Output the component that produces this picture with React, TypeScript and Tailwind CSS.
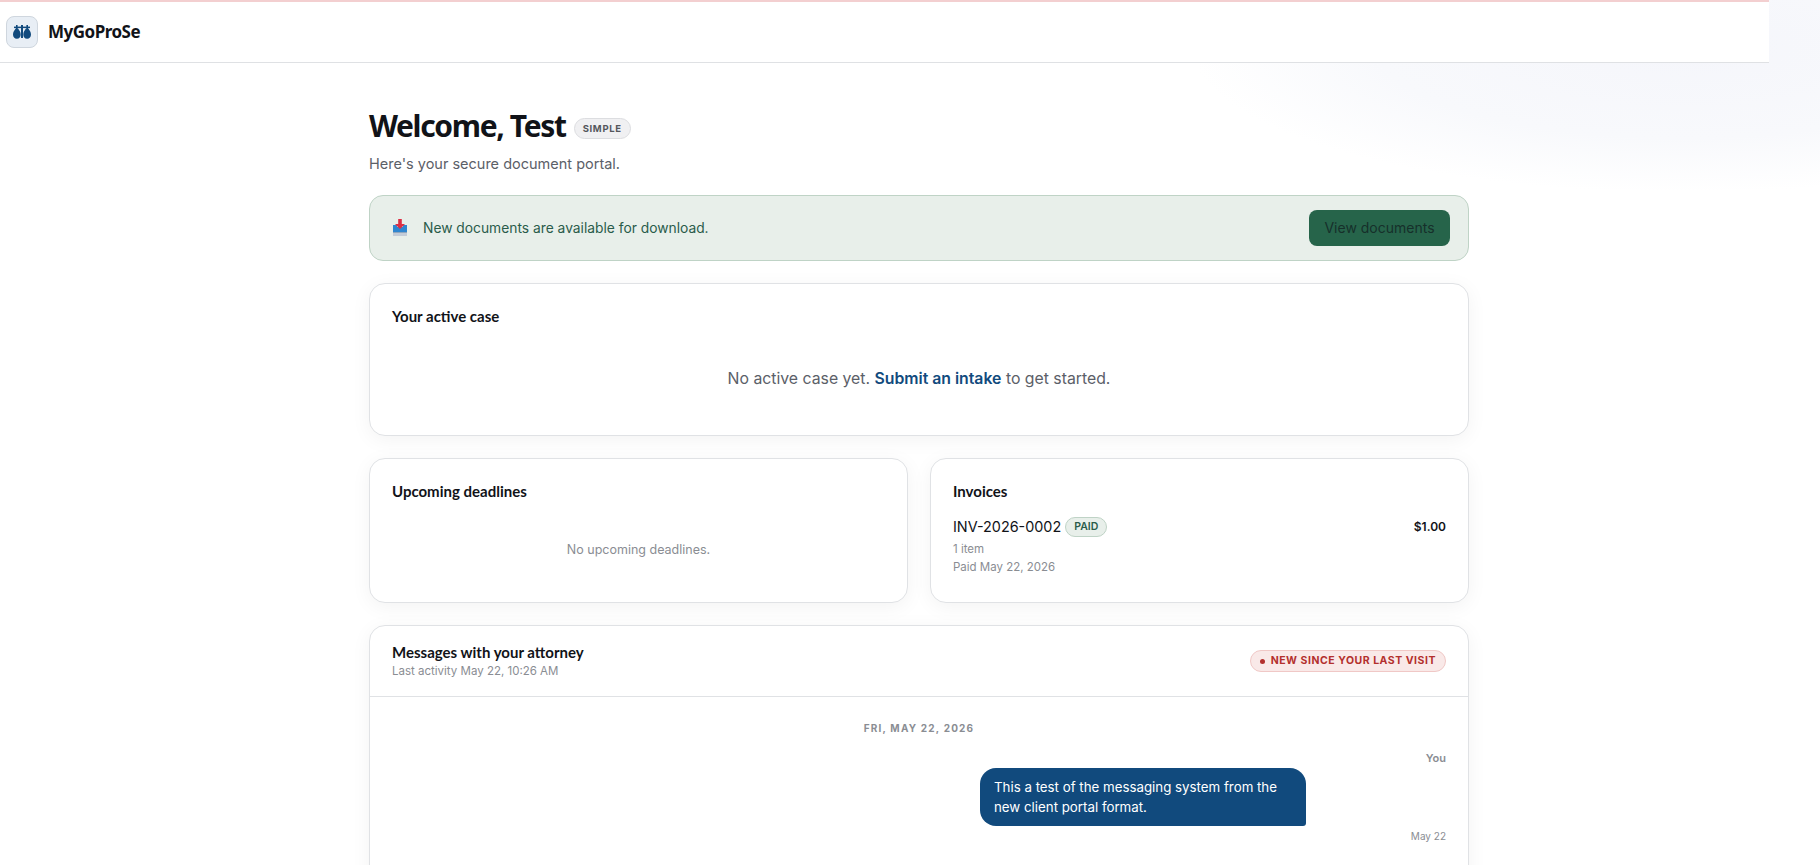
const heading = "font-['Lato',sans-serif]";
const display = "font-['Noto_Sans',sans-serif]";

const ScaleLogo = () => (
  <svg width="18" height="14" viewBox="0 0 18 14" fill="#114a7d">
    <rect x="8" y="0" width="2" height="13" />
    <rect x="3" y="0" width="1.6" height="4" />
    <rect x="13.4" y="0" width="1.6" height="4" />
    <rect x="1" y="1.6" width="16" height="1.5" />
    <path d="M2.6 3.5C1.4 5.6 0 7 0 9.6 0 12 1.5 13.8 3.9 13.8s3.8-1.8 3.8-4.2c0-2.6-1.4-4-2.6-6.1z" />
    <path d="M12.9 3.5c-1.2 2.1-2.6 3.5-2.6 6.1 0 2.4 1.4 4.2 3.8 4.2S18 12 18 9.6c0-2.6-1.4-4-2.6-6.1z" />
  </svg>
);

const InboxEmoji = () => (
  <svg width="16" height="18" viewBox="0 0 16 18">
    <rect x="1" y="10" width="14" height="7" fill="#c3ccd8" />
    <path d="M1 6h4v2h6V6h4v7H1z" fill="#2f86d0" />
    <rect x="1" y="13" width="14" height="1" fill="#8fa6bd" />
    <path d="M6.2 0h3.6v5H13l-5 5-5-5h3.2z" fill="#dd2e44" />
  </svg>
);

const Card = ({ className = "", children }: { className?: string; children: React.ReactNode }) => (
  <div className={`rounded-2xl border border-[#e0e2e5] bg-white shadow-[0_4px_20px_rgba(0,0,0,0.05)] ${className}`}>
    {children}
  </div>
);

const CardTitle = ({ children }: { children: React.ReactNode }) => (
  <h3 className={`${heading} text-[15px] leading-5 font-bold text-[#111318]`}>{children}</h3>
);

export default function App() {
  return (
    <div className="relative h-[865px] overflow-hidden bg-white font-['Inter',sans-serif] text-[#111318]">
      <div className="absolute top-0 right-0 h-[190px] w-[620px] bg-[radial-gradient(ellipse_at_78%_25%,#f5f6fb_0%,#f8f9fc_45%,transparent_72%)]" />

      <header className="relative flex h-[63px] w-[1769px] items-center gap-2.5 border-t-2 border-b border-t-[#f3cfd0] border-b-[#dfe1e4] bg-white pl-1.5">
        <div className="flex size-8 items-center justify-center rounded-lg border border-[#cfd6de] bg-[#e8eef5]">
          <ScaleLogo />
        </div>
        <span className={`${display} text-[17px] font-bold tracking-[-0.03em]`}>MyGoProSe</span>
      </header>

      <main className="relative ml-[369px] flex w-[1100px] flex-col pt-[44px]">
        <div className="flex items-center gap-2">
          <h1 className={`${display} text-[30px] leading-[38px] font-bold tracking-[-0.045em] text-[#111318]`}>Welcome, Test</h1>
          <span className="mt-1 rounded-full border border-[#dcdde0] bg-[#f0f0f2] px-2 py-[2px] text-[9.5px] leading-[15px] font-bold tracking-[0.07em] text-[#55575c]">
            SIMPLE
          </span>
        </div>
        <p className="mt-2 text-[14.5px] leading-[22px] text-[#5b6068]">Here's your secure document portal.</p>

        <div className="mt-[20px] flex h-[66px] items-center rounded-[14px] border border-[#bfd3c6] bg-[#e8efea] pr-[18px] pl-[22px]">
          <InboxEmoji />
          <span className="ml-[15px] text-[13.8px] text-[#2a5c4a]">New documents are available for download.</span>
          <button className="ml-auto h-9 w-[141px] rounded-lg bg-[#26644a] text-sm text-[#16302a]">View documents</button>
        </div>

        <div className="mt-[22px] flex flex-col gap-[22px]">
          <Card className="h-[153px] px-[22px] pt-[22px]">
            <CardTitle>Your active case</CardTitle>
            <p className="mt-[41px] text-center text-[15.8px] leading-6 text-[#5b6068]">
              No active case yet. <a className="font-semibold text-[#114a7d]">Submit an intake</a> to get started.
            </p>
          </Card>

          <div className="grid grid-cols-2 gap-[22px]">
            <Card className="h-[145px] px-[22px] pt-[22px]">
              <CardTitle>Upcoming deadlines</CardTitle>
              <p className="mt-[39px] text-center text-[12.5px] leading-5 text-[#8a8d93]">No upcoming deadlines.</p>
            </Card>
            <Card className="h-[145px] px-[22px] pt-[22px]">
              <CardTitle>Invoices</CardTitle>
              <div className="mt-[16px] flex items-start justify-between">
                <div>
                  <div className="flex items-center gap-1">
                    <span className="text-[14.4px] leading-5 text-[#111318]">INV-2026-0002</span>
                    <span className="rounded-full border border-[#bfd3c6] bg-[#e8efea] px-2 text-[10.5px] leading-[18px] font-semibold text-[#2a5c4a]">PAID</span>
                  </div>
                  <p className="mt-[3px] text-[11.5px] leading-[18px] text-[#8a8d93]">1 item</p>
                  <p className="text-[11.5px] leading-[18px] text-[#8a8d93]">Paid May 22, 2026</p>
                </div>
                <span className="text-xs leading-5 font-semibold text-[#111318]">$1.00</span>
              </div>
            </Card>
          </div>

          <Card className="h-[300px]">
            <div className="flex h-[71px] items-center justify-between border-b border-[#e0e2e5] px-[22px]">
              <div className="-mt-[1px]">
                <CardTitle>Messages with your attorney</CardTitle>
                <p className="mt-[1px] text-[11.5px] leading-[17px] text-[#8a8d93]">Last activity May 22, 10:26 AM</p>
              </div>
              <span className="flex items-center gap-[6px] rounded-full border border-[#f0c8c6] bg-[#f9e9e8] px-[9px] text-[10.5px] leading-5 font-bold tracking-[0.05em] text-[#b3302d]">
                <span className="size-[5px] rounded-full bg-[#b3302d]" />
                NEW SINCE YOUR LAST VISIT
              </span>
            </div>
            <div className="flex flex-col px-[22px] pt-[23px]">
              <p className="text-center text-[10px] leading-4 font-bold tracking-[0.12em] text-[#8a8d93]">FRI, MAY 22, 2026</p>
              <p className="mt-[14px] text-right text-[11px] leading-4 font-semibold text-[#8a8d93]">You</p>
              <div className="mt-[2px] ml-[588px] w-[326px] rounded-t-2xl rounded-bl-2xl rounded-br-[3px] bg-[#114a7d] px-3.5 py-[9px] text-[13.3px] leading-5 text-white">
                This a test of the messaging system from the new client portal format.
              </div>
              <p className="mt-[2px] text-right text-[10px] leading-4 text-[#8a8d93]">May 22</p>
            </div>
          </Card>
        </div>
      </main>
    </div>
  );
}
